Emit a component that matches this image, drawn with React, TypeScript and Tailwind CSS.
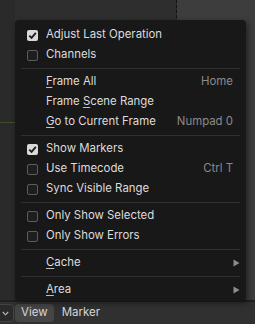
const font = { fontFamily: "Inter, 'DejaVu Sans', sans-serif" };

type Item =
  | { kind: "sep" }
  | {
      kind: "item";
      label: string;
      u?: number;
      check?: boolean;
      shortcut?: string;
      sub?: boolean;
    };

const items: Item[] = [
  { kind: "item", label: "Adjust Last Operation", check: true },
  { kind: "item", label: "Channels", check: false },
  { kind: "sep" },
  { kind: "item", label: "Frame All", u: 0, shortcut: "Home" },
  { kind: "item", label: "Frame Scene Range", u: 6 },
  { kind: "item", label: "Go to Current Frame", u: 0, shortcut: "Numpad 0" },
  { kind: "sep" },
  { kind: "item", label: "Show Markers", check: true },
  { kind: "item", label: "Use Timecode", check: false, shortcut: "Ctrl T" },
  { kind: "item", label: "Sync Visible Range", check: false },
  { kind: "sep" },
  { kind: "item", label: "Only Show Selected", check: false },
  { kind: "item", label: "Only Show Errors", check: false },
  { kind: "sep" },
  { kind: "item", label: "Cache", u: 0, sub: true },
  { kind: "sep" },
  { kind: "item", label: "Area", u: 0, sub: true },
];

function Label({ text, u }: { text: string; u?: number }) {
  if (u === undefined) return <span>{text}</span>;
  return (
    <span>
      {text.slice(0, u)}
      <span className="underline underline-offset-2 decoration-[#bdbdbd]">{text[u]}</span>
      {text.slice(u + 1)}
    </span>
  );
}

function Box({ checked }: { checked?: boolean }) {
  if (checked === undefined) return <span className="w-[11px] shrink-0" />;
  if (checked)
    return (
      <span className="w-[11px] h-[11px] shrink-0 rounded-[2px] bg-[#d9d9d9] flex items-center justify-center">
        <svg width="9" height="9" viewBox="0 0 9 9">
          <path d="M1.3 4.6 L3.6 6.9 L7.8 1.9" fill="none" stroke="#1c1c1c" strokeWidth="1.8" />
        </svg>
      </span>
    );
  return <span className="w-[11px] h-[11px] shrink-0 rounded-[2px] border border-[#5c5c5c] bg-[#1e1e1e]" />;
}

function Menu() {
  return (
    <div className="absolute left-[15px] top-[20px] w-[231px] h-[281px] rounded-[4px] bg-[#181818] shadow-[2px_2px_6px_rgba(0,0,0,0.45)] px-[6px] pt-[5px]">
      {items.map((it, i) =>
        it.kind === "sep" ? (
          <div key={i} className="h-[7px] flex items-center">
            <div className="h-px w-full bg-[#303030]" />
          </div>
        ) : (
          <div key={i} className="h-[20px] flex items-center pl-[6px] text-[11.4px] text-[#dcdcdc]">
            <Box checked={it.check} />
            <span className="ml-[8px] flex-1">
              <Label text={it.label} u={it.u} />
            </span>
            {it.shortcut && <span className="pr-[7px] text-[#8a8a8a]">{it.shortcut}</span>}
            {it.sub && (
              <svg width="7" height="8" viewBox="0 0 7 8">
                <path d="M0.5 0.5 L6.5 4 L0.5 7.5 Z" fill="#8c8c8c" />
              </svg>
            )}
          </div>
        )
      )}
    </div>
  );
}

export default function App() {
  return (
    <div className="relative w-[255px] h-[324px] overflow-hidden flex flex-col bg-[#2c2c2c]" style={font}>
      <div className="flex flex-1">
        <div className="w-[15px] bg-[#2a2a2a]">
          <div className="mt-[122px] h-px bg-[#3d4d2e]" />
        </div>
        <div className="w-[161px] bg-[#2e2e2e]" />
        <div className="w-px border-l border-dashed border-[#111]" />
        <div className="flex-1 bg-[#3d3d3d]" />
      </div>
      <div className="h-[2px] bg-[#1f1f1f]" />
      <div className="h-[22px] bg-[#303030] flex items-center text-[11.5px] text-[#d6d6d6]">
        <div className="ml-[-10px] w-[24px] h-[18px] rounded-[4px] border border-[#444] bg-[#2a2a2a] flex items-center justify-end pr-[4px]">
          <svg width="7" height="5" viewBox="0 0 7 5">
            <path d="M0.8 1 L3.5 3.8 L6.2 1" fill="none" stroke="#bcbcbc" strokeWidth="1.1" />
          </svg>
        </div>
        <div className="ml-[1px] h-[18px] px-[6px] rounded-[4px] bg-[#454545] flex items-center">View</div>
        <div className="h-[18px] px-[8px] flex items-center">Marker</div>
      </div>
      <Menu />
    </div>
  );
}
